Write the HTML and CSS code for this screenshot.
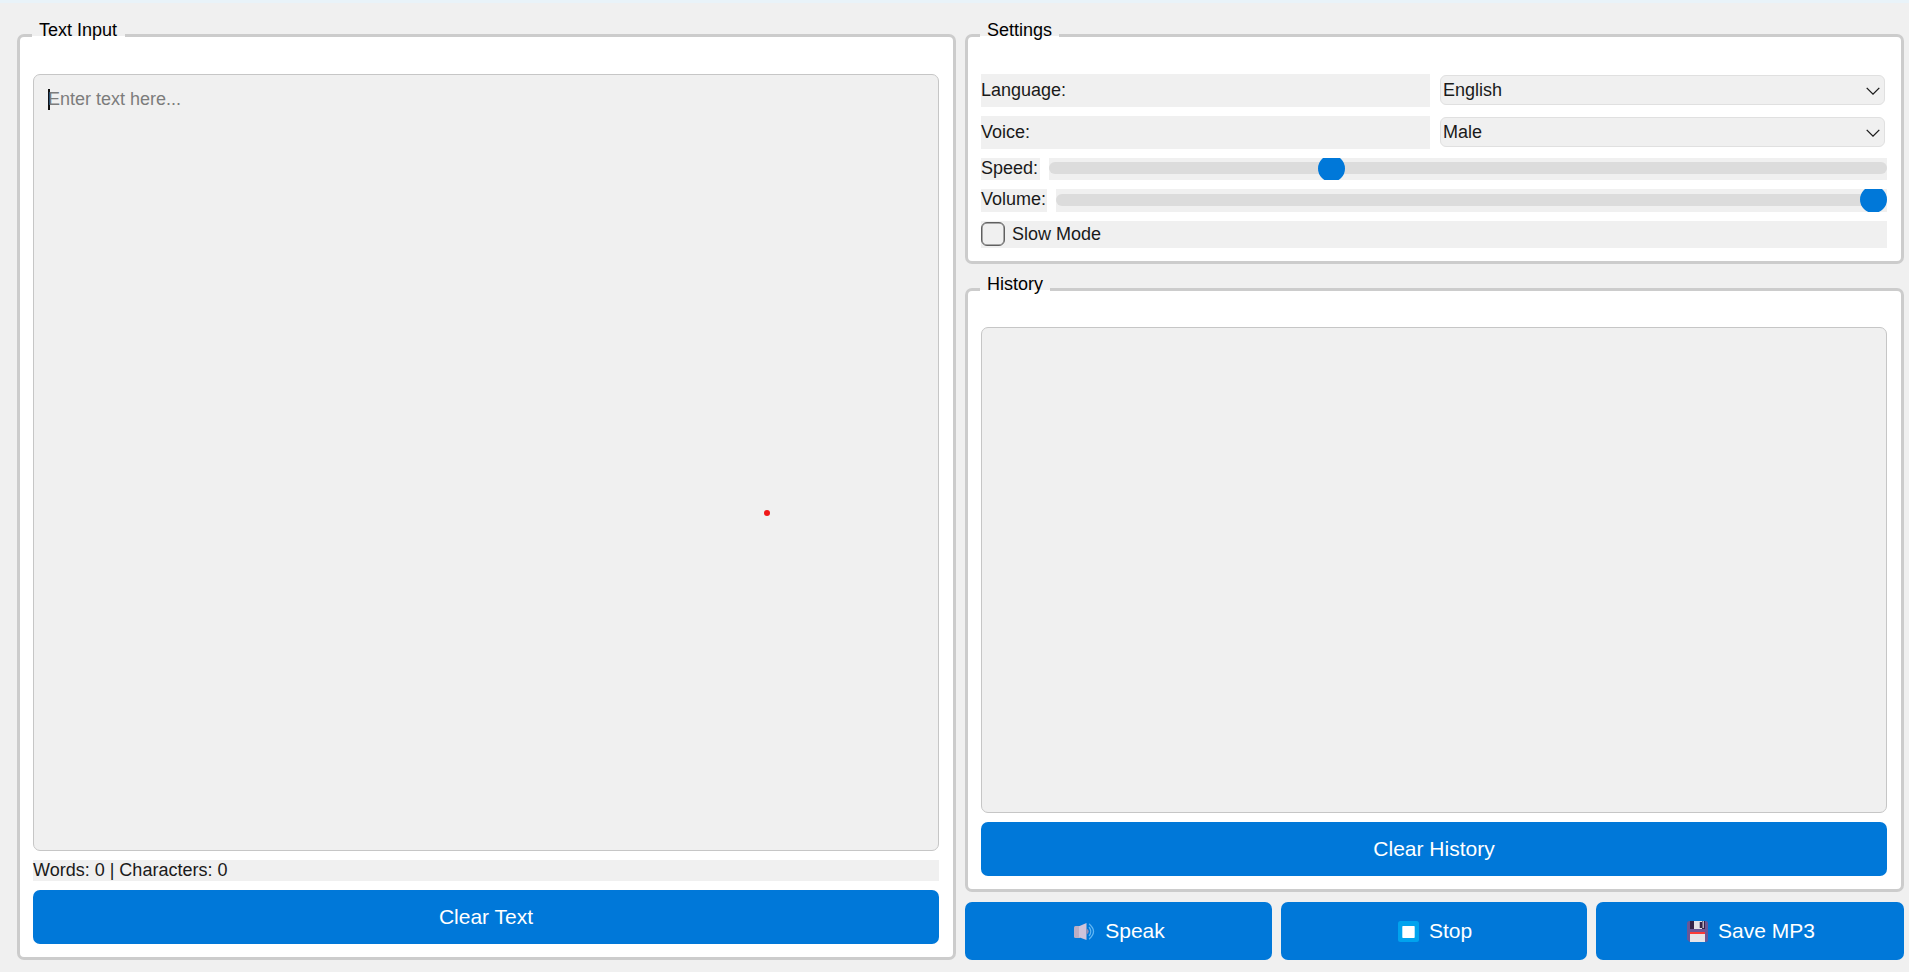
FILE: index.html
```html
<!DOCTYPE html>
<html lang="en">
<head>
<meta charset="utf-8">
<title>Text to Speech</title>
<link rel="stylesheet" href="styles.css">
</head>
<body>
<main class="window">
  <section class="group text-group">
    <h2 class="legend legend-text">Text Input</h2>
    <div class="editor"><span class="caret"></span><span class="placeholder">Enter text here...</span></div>
    <div class="counter">Words: 0 | Characters: 0</div>
    <button class="btn">Clear Text</button>
  </section>
  <div class="side">
    <section class="group settings">
      <h2 class="legend legend-settings">Settings</h2>
      <div class="row field"><span class="label">Language:</span>
        <div class="combo"><span>English</span><svg class="chevron" viewBox="0 0 14 8"><path d="M.7.9 7 7.1 13.3.9"/></svg></div></div>
      <div class="row field"><span class="label">Voice:</span>
        <div class="combo"><span>Male</span><svg class="chevron" viewBox="0 0 14 8"><path d="M.7.9 7 7.1 13.3.9"/></svg></div></div>
      <div class="row speed"><span class="label">Speed:</span><div class="slider"><i class="groove"></i><i class="handle"></i></div></div>
      <div class="row volume"><span class="label">Volume:</span><div class="slider"><i class="groove"></i><i class="handle"></i></div></div>
      <div class="slow"><span class="check"></span><span>Slow Mode</span></div>
    </section>
    <section class="group history">
      <h2 class="legend legend-history">History</h2>
      <div class="list"></div>
      <button class="btn">Clear History</button>
    </section>
    <div class="actions">
      <button class="btn"><svg class="icon" viewBox="0 0 21 21"><path fill="#bcaec4" d="M1.500 5H6v12H1.500Q0 17 0 15.500V6.500Q0 5 1.500 5z"/><path fill="#d0c4da" d="M5 5.200 12.500 2v17L5 16.200z"/><path fill="#9b8cae" d="M12.500 7.500q2.200 1 2.200 3t-2.200 3z"/><path fill="none" stroke="#5fb5f3" stroke-width="1.300" stroke-linecap="round" d="M15.300 6.500q3 4 0 8M15.500 3.300q8 7.200 0 14.400"/></svg>Speak</button>
      <button class="btn"><svg class="icon" viewBox="0 0 21 21"><rect width="21" height="21" rx="2.500" fill="#00a3ee"/><rect x="4.300" y="5" width="12.400" height="12" rx=".7" fill="#fff"/></svg>Stop</button>
      <button class="btn"><svg class="icon" viewBox="0 0 21 21"><path fill="#6a5796" d="M2.500 0h16Q21 0 21 2.500v16q0 2.500-2.500 2.500h-16L0 18.500v-16Q0 0 2.500 0z"/><path fill="#352449" d="M3 0h15v8H3z"/><path fill="#e6e3e8" d="M7 0h8v8H7z"/><path fill="#b8b0c0" d="M12 1h1v6h-1zM15.500 0H17v7h-1.500z"/><path fill="#352449" d="M13 1h2v6h-2z"/><path fill="#fb3b37" d="M3 11h15v2H3z"/><path fill="#e6e4e8" d="M3 13h15v8H3z"/></svg>Save MP3</button>
    </div>
  </div>
  <span class="dot"></span>
</main>
</body>
</html>
```
FILE: styles.css
```css
* { box-sizing: border-box; }
body {
  margin: 0;
  font: 18px/21px "Liberation Sans", Arial, sans-serif;
  color: #1a1a1a;
  background: #f0f0f0;
}
.window {
  position: relative;
  display: grid;
  grid-template-columns: 939px 939px;
  column-gap: 9px;
  height: 972px;
  padding: 31px 0 12px 17px;
  border-top: 3px solid #e9f3f9;
}
.side { display: flex; flex-direction: column; min-height: 0; }
.group {
  position: relative;
  display: flex;
  flex-direction: column;
  gap: 9px;
  padding: 37px 14px 13px 13px;
  border: 3px solid #ccc;
  border-radius: 7px;
  background: #fff;
}
.legend {
  position: absolute;
  top: -17px;
  left: 12px;
  height: 18px;
  margin: 0;
  padding-left: 7px;
  font-size: 18px;
  font-weight: 400;
  line-height: 21px;
  color: #000;
  white-space: nowrap;
  background: linear-gradient(#f0f0f0 16px, #fff 16px);
}
.legend-text { width: 93px; }
.legend-settings { width: 79px; }
.legend-history { width: 70px; }
.editor, .list {
  flex: 1;
  border: 1px solid #c6c6c6;
  border-radius: 7px;
  background: #f0f0f0;
}
.editor { display: flex; padding: 14px; color: #7c7c7c; }
.caret { width: 2px; height: 21px; margin-right: -2px; background: #111; }
.counter { height: 21px; line-height: 20px; background: #f0f0f0; }
.btn {
  display: flex;
  align-items: center;
  justify-content: center;
  height: 54px;
  padding: 0;
  border: 0;
  border-radius: 7px;
  font: 21px/24px "Liberation Sans", Arial, sans-serif;
  color: #fff;
  background: #0078d9;
}
.settings { height: 230px; }
.row { display: grid; column-gap: 9px; }
.field { grid-template-columns: 449px 447px; height: 33px; column-gap: 10px; align-items: start; }
.field .label { height: 33px; line-height: 32px; }
.label { background: #f0f0f0; }
.combo {
  display: flex;
  align-items: center;
  justify-content: space-between;
  width: 445px;
  height: 30px;
  margin-top: 1px;
  padding: 2px 4px 0 2px;
  border: 1px solid #e0e0e0;
  border-radius: 6px;
  background: #f0f0f0;
}
.combo span { margin-top: -2px; }
.chevron { width: 14px; height: 8px; fill: none; stroke: #1a1a1a; stroke-width: 1.3; }
.speed { grid-template-columns: 59px 838px; height: 22px; }
.volume { grid-template-columns: 66px 831px; height: 23px; }
.slider { position: relative; overflow: hidden; background: #f0f0f0; }
.groove { display: block; height: 12px; margin-top: 4px; border-radius: 6px; background: #dcdcdc; }
.volume .groove { margin-top: 5px; }
.handle { position: absolute; top: -3px; width: 27px; height: 27px; border-radius: 50%; background: #0078d9; }
.speed .handle { left: 269px; }
.volume .handle { right: 0; }
.slow { display: flex; align-items: center; gap: 7px; height: 27px; padding-bottom: 1px; background: #f0f0f0; }
.check { width: 24px; height: 24px; border: 1.5px solid #606060; border-radius: 6px; box-shadow: inset 0 0 0 .5px #606060; }
.slow span:last-child { line-height: 20px; }
.history { flex: 1; margin-top: 24px; padding-top: 36px; }
.actions { display: grid; grid-template-columns: 307px 306px 308px; gap: 9px; margin-top: 10px; }
.actions .btn { height: 58px; gap: 10px; padding-left: 2px; }
.icon { width: 21px; height: 21px; }
.dot { position: absolute; left: 764px; top: 507px; width: 6px; height: 6px; border-radius: 50%; background: #f01818; }
```
